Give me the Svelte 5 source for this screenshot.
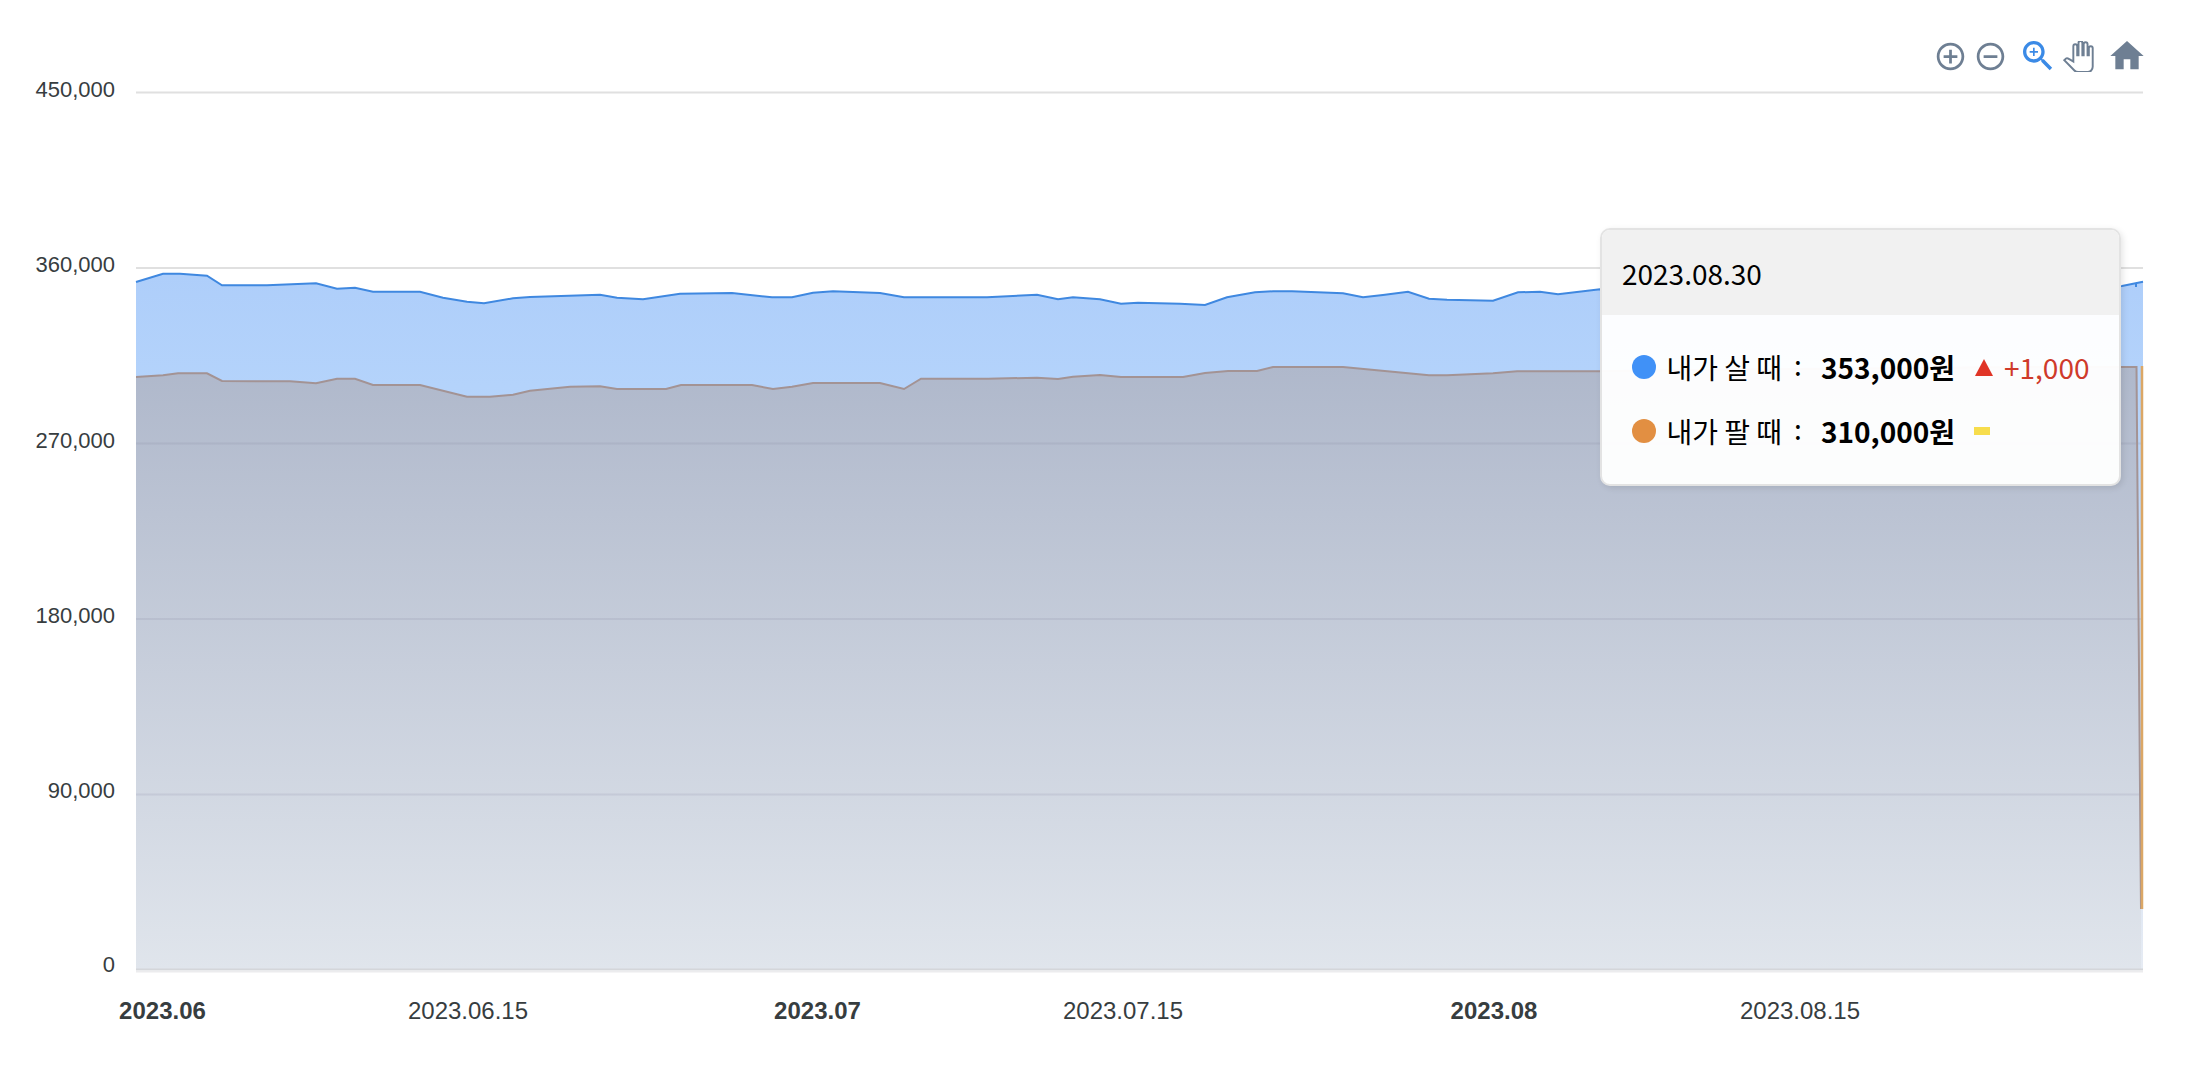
<script lang="ts">
  // traced series, in page pixels
  const buy = [[136,282],[163,273.7],[180,273.7],[207,275.7],[222,285.3],[267,285.3],[316,283.3],[337,288.7],[355,287.7],[373,291.7],[420,291.7],[443,297.7],[467,301.7],[484,303.3],[513,298.3],[530,297],[600,294.7],[617,297.7],[643,299.3],[680,293.7],[732,293],[772,297.3],[792,297.3],[813,292.7],[833,291.3],[880,293],[904,297.3],[987,297.3],[1037,294.7],[1058,299.3],[1073,297.3],[1100,299.3],[1121,303.7],[1138,302.7],[1180,303.7],[1205,305],[1227,297.3],[1255,292.3],[1273,291.3],[1292,291.3],[1343,293.3],[1363,297.3],[1383,295],[1408,291.7],[1429,298.7],[1447,299.7],[1493,300.7],[1518,292.3],[1540,291.7],[1558,294.3],[1600,289.3],[1800,290],[2000,288],[2122,286],[2143,281.7]];
  const sell = [[136,377],[163,375.3],[178,373.3],[207,373.3],[222,381],[290,381.3],[316,383.3],[337,378.7],[355,378.7],[373,385],[420,385],[467,396.7],[490,396.7],[513,394.7],[530,390.7],[570,386.7],[600,386.3],[617,389],[666,389],[681,385],[752,385],[773,389],[792,386.7],[813,383],[880,383],[904,389],[921,378.7],[988,378.7],[1037,377.7],[1058,379],[1073,376.7],[1100,375],[1121,377],[1183,377],[1205,373],[1228,371],[1257,371],[1273,367],[1343,367],[1429,375.3],[1447,375.3],[1493,373.3],[1517,371.3],[1600,371.3],[1800,369],[2045,367],[2136.5,367],[2141,909]];

  const toPath = (pts: number[][]) => pts.map((p) => p.join(',')).join(' ');
  const base = 969.5;
  const area = (pts: number[][]) => `${toPath(pts)} ${pts[pts.length - 1][0]},${base} ${pts[0][0]},${base}`;

  const topGrid = [92.5, 268];
  const innerGrid = [443.5, 619, 794.5];
  const yLabels = [
    { text: '450,000', y: 97 },
    { text: '360,000', y: 272 },
    { text: '270,000', y: 448 },
    { text: '180,000', y: 623 },
    { text: '90,000', y: 798 },
    { text: '0', y: 972 }
  ];
  const xLabels = [
    { text: '2023.06', x: 162.5, bold: true },
    { text: '2023.06.15', x: 468 },
    { text: '2023.07', x: 817.5, bold: true },
    { text: '2023.07.15', x: 1123 },
    { text: '2023.08', x: 1494, bold: true },
    { text: '2023.08.15', x: 1800 }
  ];
</script>

<div class="chart">
  <svg class="plot" width="2188" height="1076" viewBox="0 0 2188 1076">
    <defs>
      <linearGradient id="buyFill" gradientUnits="userSpaceOnUse" x1="0" y1="275" x2="0" y2="970">
        <stop offset="0" stop-color="#aecefa" />
        <stop offset="0.16" stop-color="#b4d3fb" />
        <stop offset="1" stop-color="#e6ebf3" />
      </linearGradient>
      <linearGradient id="sellFill" gradientUnits="userSpaceOnUse" x1="0" y1="366" x2="0" y2="970">
        <stop offset="0" stop-color="#afb8cb" />
        <stop offset="1" stop-color="#e0e5ec" />
      </linearGradient>
    </defs>

    {#each topGrid as y}
      <line class="grid-top" x1="136" x2="2143" y1={y} y2={y} />
    {/each}

    <polygon points={area(buy)} fill="url(#buyFill)" />
    <polygon points={area(sell)} fill="url(#sellFill)" />

    {#each innerGrid as y}
      <line class="grid" x1="136" x2="2143" y1={y} y2={y} />
    {/each}
    <line class="axis" x1="136" x2="2143" y1="969.5" y2="969.5" />
    <line class="axis-soft" x1="136" x2="2143" y1="971.5" y2="971.5" />

    <polyline class="buy" points={toPath(buy)} />
    <line class="buy" x1="2136" x2="2136" y1="283" y2="287" />
    <polyline class="sell" points={toPath(sell)} />
    <line class="sell-edge" x1="2142" x2="2142" y1="366" y2="909" />

    {#each yLabels as l}
      <text class="tick" x="115" y={l.y} text-anchor="end">{l.text}</text>
    {/each}
    {#each xLabels as l}
      <text class="tick date" class:bold={l.bold} x={l.x} y="1019" text-anchor="middle">{l.text}</text>
    {/each}
  </svg>

  <div class="toolbar">
    <svg class="ic plus" viewBox="0 0 24 24"><path d="M13 7h-2v4H7v2h4v4h2v-4h4v-2h-4V7zm-1-5C6.48 2 2 6.48 2 12s4.48 10 10 10 10-4.48 10-10S17.52 2 12 2zm0 18c-4.41 0-8-3.59-8-8s3.59-8 8-8 8 3.59 8 8-3.59 8-8 8z" /></svg>
    <svg class="ic minus" viewBox="0 0 24 24"><path d="M7 11v2h10v-2H7zm5-9C6.48 2 2 6.48 2 12s4.48 10 10 10 10-4.48 10-10S17.52 2 12 2zm0 18c-4.41 0-8-3.59-8-8s3.59-8 8-8 8 3.59 8 8-3.59 8-8 8z" /></svg>
    <svg class="ic zoom" viewBox="0 0 24 24">
      <path d="M15.5 14h-.79l-.28-.27C15.41 12.59 16 11.11 16 9.5 16 5.91 13.09 3 9.5 3S3 5.91 3 9.5 5.91 16 9.5 16c1.61 0 3.09-.59 4.23-1.57l.27.28v.79l5 4.99L20.49 19l-4.99-5zm-6 0C7.01 14 5 11.99 5 9.5S7.01 5 9.5 5 14 7.01 14 9.5 11.99 14 9.5 14z" />
      <path d="M12 10h-2v2H9v-2H7V9h2V7h1v2h2v1z" />
    </svg>
    <svg class="ic hand" viewBox="0 0 24 24">
      <path d="M23 5.5V20c0 2.2-1.8 4-4 4h-7.3c-1.08 0-2.1-.43-2.85-1.19L1 14.83s1.26-1.23 1.3-1.25c.22-.19.49-.29.79-.29.22 0 .42.06.6.16.04.01 4.31 2.46 4.31 2.46V4c0-.83.67-1.5 1.5-1.5S11 3.17 11 4v7h1V1.5c0-.83.67-1.5 1.5-1.5S15 .67 15 1.5V11h1V2.5c0-.83.67-1.5 1.5-1.5s1.5.67 1.5 1.5V11h1V5.5c0-.83.67-1.5 1.5-1.5s1.5.67 1.5 1.5z" />
    </svg>
    <svg class="ic home" viewBox="0 0 24 24"><path d="M10 20v-6h4v6h5v-8h3L12 3 2 12h3v8z" /></svg>
  </div>

  <div class="tooltip">
    <div class="tip-title">2023.08.30</div>
    <div class="tip-body">
      <div class="row">
        <span class="dot blue"></span>
        <span class="name">내가 살 때<span class="colon">:</span></span>
        <strong class="value">353,000원</strong>
        <span class="tri"></span>
        <span class="delta">+1,000</span>
      </div>
      <div class="row">
        <span class="dot orange"></span>
        <span class="name">내가 팔 때<span class="colon">:</span></span>
        <strong class="value">310,000원</strong>
        <span class="dash"></span>
      </div>
    </div>
  </div>
</div>

<style>
  :global(body) {
    background: #fff;
  }
  .chart {
    position: relative;
    width: 2188px;
    height: 1076px;
    overflow: hidden;
    font-family: "Liberation Sans", Arial, sans-serif;
  }
  .plot {
    display: block;
  }
  .grid-top {
    stroke: #e0e0e0;
    stroke-width: 2;
  }
  .grid {
    stroke: rgba(120, 120, 150, 0.14);
    stroke-width: 2;
  }
  .axis {
    stroke: #d4d6da;
    stroke-width: 2;
  }
  .axis-soft {
    stroke: #ececee;
    stroke-width: 2;
  }
  .buy {
    fill: none;
    stroke: #3f88e0;
    stroke-width: 2;
  }
  .sell {
    fill: none;
    stroke: #a39394;
    stroke-width: 2;
  }
  .sell-edge {
    stroke: #dba766;
    stroke-width: 2.5;
  }
  .tick {
    font-family: "Liberation Sans", Arial, sans-serif;
    font-size: 22px;
    fill: #373d3f;
  }
  .date {
    font-size: 24px;
  }
  .bold {
    font-weight: 700;
  }

  .toolbar {
    position: absolute;
    top: 36px;
    right: 41px;
    display: flex;
    align-items: center;
    height: 40px;
  }
  .ic {
    display: block;
    fill: #6e7f93;
  }
  .plus,
  .minus {
    width: 33px;
    height: 33px;
  }
  .minus {
    margin-left: 7px;
  }
  .zoom {
    width: 40px;
    height: 40px;
    margin-left: 10.5px;
    fill: #3b8ae6;
  }
  .hand {
    width: 31px;
    height: 31px;
    margin-left: 5px;
    fill: #fff;
    stroke: #6e7f93;
    stroke-width: 1.5;
  }
  .home {
    width: 40px;
    height: 40px;
    margin-left: 13.5px;
  }

  .tooltip {
    position: absolute;
    left: 1600px;
    top: 228px;
    width: 521px;
    height: 258px;
    box-sizing: border-box;
    border: 2px solid #e3e3e3;
    border-radius: 10px;
    overflow: hidden;
    background: rgba(255, 255, 255, 0.96);
    box-shadow: 2px 2px 6px rgba(0, 0, 0, 0.1);
    font-family: "Noto Sans CJK KR", "Noto Sans", sans-serif;
    font-size: 28px;
    color: #000;
  }
  .tip-title {
    height: 85px;
    box-sizing: border-box;
    padding-left: 20px;
    display: flex;
    align-items: center;
    background: #f1f1f1;
  }
  .tip-body {
    padding: 20px 0 0 30px;
    display: flex;
    flex-direction: column;
  }
  .row {
    height: 64px;
    display: flex;
    align-items: center;
  }
  .dot {
    width: 24px;
    height: 24px;
    border-radius: 50%;
    margin-right: 10.5px;
  }
  .blue {
    background: #4091f7;
  }
  .orange {
    background: #e28f42;
  }
  .name {
    width: 154.5px;
    white-space: nowrap;
  }
  .colon {
    display: inline-block;
    margin-left: 12px;
    transform: translateY(-3px);
  }
  .value {
    width: 154px;
    font-weight: 700;
    white-space: nowrap;
  }
  .tri {
    width: 0;
    height: 0;
    border-left: 9.5px solid transparent;
    border-right: 9.5px solid transparent;
    border-bottom: 17px solid #e03426;
    margin-right: 11px;
  }
  .delta {
    color: #cf3a2a;
  }
  .dash {
    width: 16px;
    height: 8px;
    margin-left: -1px;
    background: #f7dd4c;
  }
</style>
